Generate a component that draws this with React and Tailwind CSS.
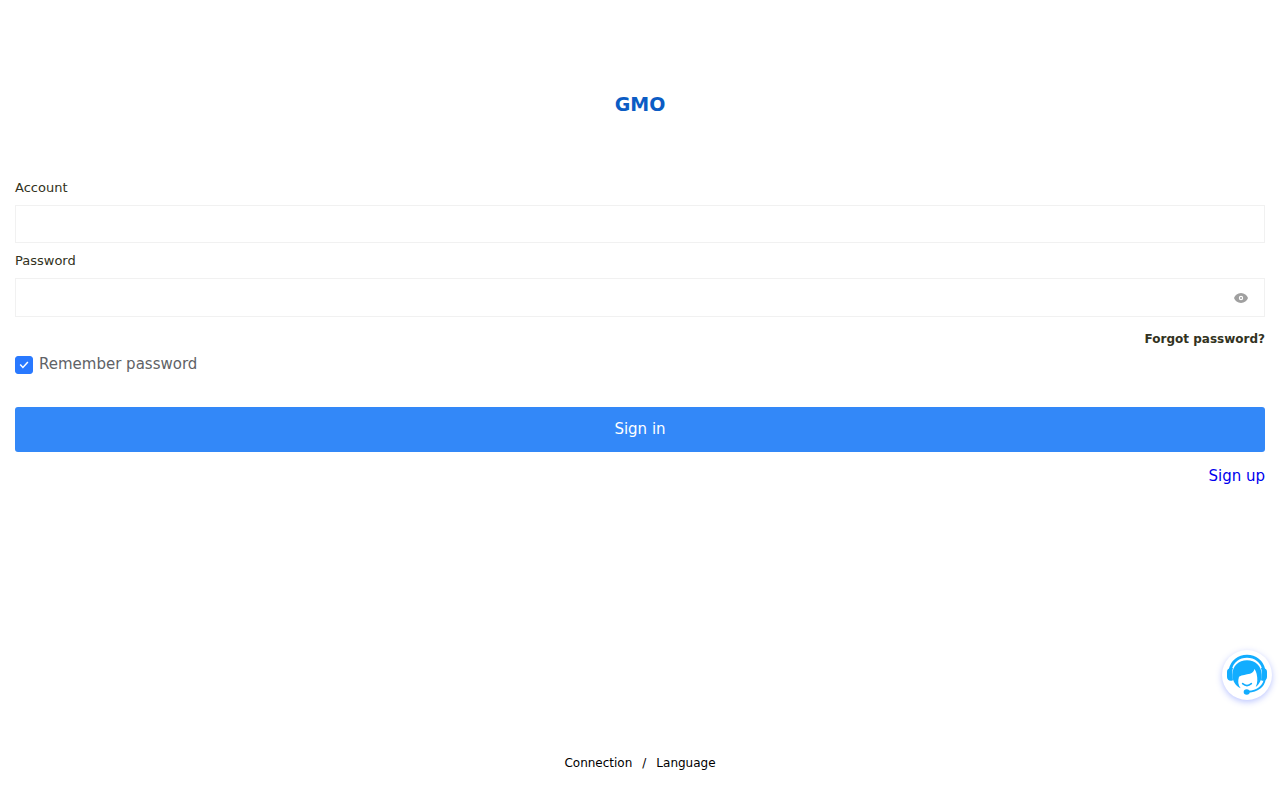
import { useState } from "react";

function Logo() {
  return (
    <svg role="img" aria-label="GMO" className="h-6 w-20" viewBox="0 0 80 24">
      <text
        x="40"
        y="19"
        textAnchor="middle"
        className="fill-[#0b5cc4] font-['DejaVu_Sans',sans-serif] text-[19px] font-bold"
      >
        GMO
      </text>
    </svg>
  );
}

function EyeIcon() {
  return (
    <svg className="h-3 w-4" viewBox="0 0 16 12" aria-hidden="true">
      <path
        fill="#a0a0a0"
        fillRule="evenodd"
        d="M8 1C4.600 1 2 3.200 1 6c1 2.800 3.600 5 7 5s6-2.200 7-5C14 3.200 11.400 1 8 1Zm0 7.200a2.200 2.200 0 1 1 0-4.400 2.200 2.200 0 0 1 0 4.400Z"
      />
      <circle cx="8" cy="6" r="1" fill="#a0a0a0" />
    </svg>
  );
}

function SupportIcon() {
  return (
    <svg className="size-full" viewBox="0 0 150 150" aria-hidden="true">
      <g fill="none" stroke="#12adff" strokeLinecap="round">
        <path strokeWidth="9" d="M25 58C30 34 50 19 75 19s45 15 50 39" />
        <path strokeWidth="6" d="M128 88c-3 21-22 36-49 37" />
        <path strokeWidth="5" d="M62 101c8 7 18 7 26 0" />
      </g>
      <g fill="#12adff">
        <path d="M28 54c-7 0-13 4-13 11v16c0 8 6 12 14 11l4-1-2-17c-1-8 0-14 2-20h-5Z" />
        <path d="M122 54c7 0 13 4 13 11v16c0 8-6 12-14 11l-4-1 2-17c1-8 0-14-2-20h5Z" />
        <path d="M56 115C40 107 31 92 31 74c0-26 19-43 44-43s44 17 44 43c0 15-7 29-18 37 6-12 6-25 3-39-1-5-4-11-7-15-1 8-6 12-13 14-12 3-23 3-33 9 -4 13-3 25 5 35Z" />
        <ellipse cx="74" cy="126" rx="9" ry="8" />
      </g>
    </svg>
  );
}

export default function App() {
  const [shown, setShown] = useState(false);

  return (
    <div className="flex min-h-screen flex-col bg-white font-['DejaVu_Sans',sans-serif]">
      <header className="flex justify-center pt-[92px] pb-[62px]">
        <Logo />
      </header>

      <main className="px-[15px]">
        <form className="flex flex-col" onSubmit={(e) => e.preventDefault()}>
          <label htmlFor="account" className="text-[13px] leading-5 text-[#323221]">
            Account
          </label>
          <input
            id="account"
            type="text"
            className="mt-[7px] h-[38px] border border-[#f1f1f1] bg-white px-3 text-[13px] outline-none"
          />

          <label htmlFor="password" className="mt-2 text-[13px] leading-5 text-[#323221]">
            Password
          </label>
          <div className="mt-[7px] flex h-[39px] items-center border border-[#f1f1f1] bg-white pr-[15px]">
            <input
              id="password"
              type={shown ? "text" : "password"}
              className="h-full min-w-0 flex-1 px-3 text-[13px] outline-none"
            />
            <button type="button" aria-label="Show password" onClick={() => setShown(!shown)}>
              <EyeIcon />
            </button>
          </div>

          <a href="#forgot" className="mt-3 self-end text-xs leading-5 font-bold text-[#323221]">
            Forgot password?
          </a>

          <div className="mt-[7px] flex items-start gap-1.5">
            <span className="grid size-[18px]">
              <input
                id="remember"
                type="checkbox"
                defaultChecked
                className="peer col-start-1 row-start-1 size-[18px] appearance-none rounded-[3px] border border-[#c8c9cc] bg-white checked:border-[#2979ff] checked:bg-[#2979ff]"
              />
              <svg
                className="pointer-events-none invisible col-start-1 row-start-1 size-[18px] peer-checked:visible"
                viewBox="0 0 18 18"
                fill="none"
                stroke="#ffffff"
                strokeWidth="1.500"
                aria-hidden="true"
              >
                <path d="M5.200 8.600l2.700 2.800 5-5.500" />
              </svg>
            </span>
            <label htmlFor="remember" className="text-[15px] leading-4 text-[#606266]">
              Remember password
            </label>
          </div>

          <button
            type="submit"
            className="mt-[33px] h-[45px] rounded-[3px] bg-[#3388f8] text-[15px] text-white"
          >
            Sign in
          </button>

          <a href="#signup" className="mt-3 self-end text-[15px] leading-6 text-[#0000ee]">
            Sign up
          </a>
        </form>
      </main>

      <footer className="mt-auto flex justify-center gap-2.5 pb-[27px] text-xs leading-5 text-black">
        <a href="#connection">Connection</a>
        <span>/</span>
        <a href="#language">Language</a>
      </footer>

      <button
        type="button"
        aria-label="Customer support"
        className="fixed right-2 bottom-[100px] size-[50px] rounded-full bg-white shadow-[0_2px_6px_rgba(60,90,255,0.35)]"
      >
        <SupportIcon />
      </button>
    </div>
  );
}
